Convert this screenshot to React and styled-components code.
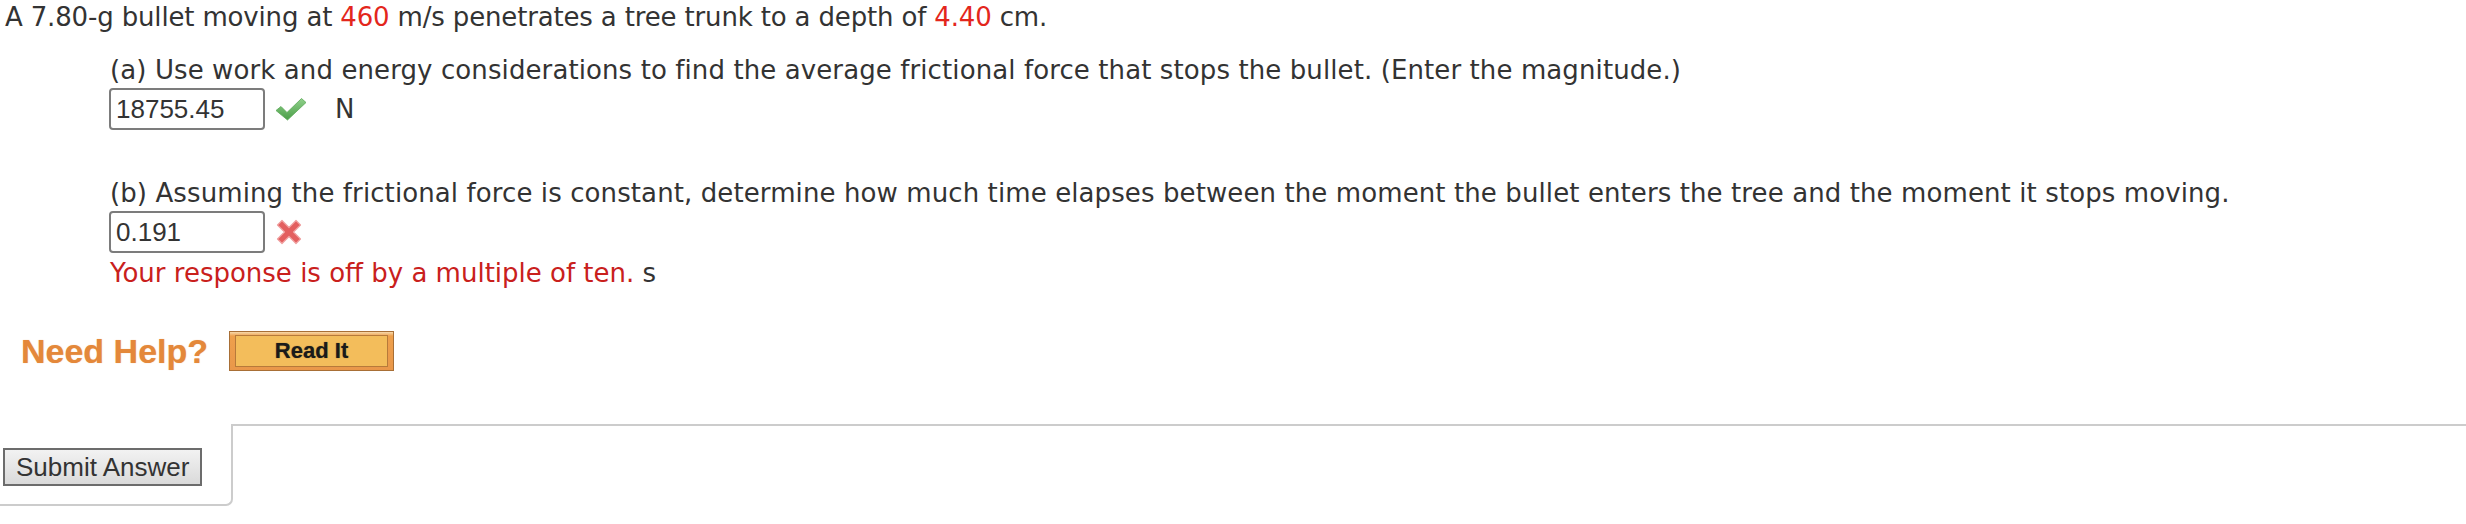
import React from "react";
import styled, { createGlobalStyle } from "styled-components";

const COLORS = {
  text: "#333333",
  given: "#e3261c",
  wrong: "#c9201c",
  rule: "#cccccc",
  help: "#e4883a",
};

const GlobalStyle = createGlobalStyle`
  body {
    margin: 0;
    background: #ffffff;
    font-family: Verdana, "DejaVu Sans", sans-serif;
    font-size: 26px;
    color: ${COLORS.text};
  }
`;

const Page = styled.div`
  padding-top: 0;
`;

const Stem = styled.p`
  margin: 0;
  padding-left: 5px;
  line-height: 34px;
  letter-spacing: -0.16px;
`;

const Given = styled.span`
  color: ${COLORS.given};
`;

const Part = styled.div`
  margin-left: 110px;
  margin-top: ${(props) => props.top}px;
`;

const Prompt = styled.p`
  margin: 0;
  line-height: 34px;
  letter-spacing: 0.1px;
`;

const AnswerRow = styled.div`
  display: flex;
  align-items: center;
  margin-top: 1px;
`;

const AnswerBox = styled.div`
  box-sizing: border-box;
  width: 156px;
  height: 42px;
  margin-left: -1px;
  border: 2px solid #7c7c7c;
  border-radius: 4px;
  padding: 0 5px;
  display: flex;
  align-items: center;
  font-family: Arial, "Liberation Sans", sans-serif;
  font-size: 26px;
  color: ${COLORS.text};
`;

const Mark = styled.svg`
  margin-left: ${(props) => props.gap}px;
  flex-shrink: 0;
`;

const Unit = styled.span`
  margin-left: 28px;
  line-height: 34px;
`;

const Feedback = styled.p`
  margin: 3px 0 0 0;
  line-height: 34px;
  color: ${COLORS.wrong};
  span {
    color: ${COLORS.text};
  }
`;

const HelpRow = styled.div`
  display: flex;
  align-items: center;
  margin-top: 41px;
  padding-left: 21px;
`;

const HelpLabel = styled.span`
  font-family: Arial, "Liberation Sans", sans-serif;
  font-weight: bold;
  font-size: 34px;
  color: ${COLORS.help};
  text-shadow: 0 0 1px rgba(228, 136, 58, 0.6);
`;

const ReadItButton = styled.button`
  box-sizing: border-box;
  width: 165px;
  height: 40px;
  margin-left: 21px;
  padding: 3px 5px;
  border: 1px solid #a86f36;
  background: linear-gradient(#f7d9ab 0, #eea04c 4px, #e9974a 100%);
  cursor: pointer;
  span {
    box-sizing: border-box;
    display: flex;
    align-items: center;
    justify-content: center;
    height: 100%;
    border: 1px solid #b77a3a;
    background: #f3bd5b;
    font-family: Arial, "Liberation Sans", sans-serif;
    font-weight: bold;
    font-size: 22px;
    color: #1a1a1a;
    text-shadow: 0 0 1px rgba(0, 0, 0, 0.5);
  }
`;

const SubmitBar = styled.div`
  display: flex;
  margin-top: 53px;
`;

const SubmitCell = styled.div`
  box-sizing: border-box;
  width: 233px;
  padding: 24px 0 18px 3px;
  border-right: 2px solid ${COLORS.rule};
  border-bottom: 2px solid ${COLORS.rule};
  border-bottom-right-radius: 7px;
`;

const SubmitButton = styled.button`
  box-sizing: border-box;
  width: 199px;
  height: 38px;
  padding: 0 0 0 11px;
  text-align: left;
  border: 2px solid #6c6c6c;
  background: linear-gradient(#f2f2f2, #dadada);
  font-family: Arial, "Liberation Sans", sans-serif;
  font-size: 26px;
  color: ${COLORS.text};
  cursor: pointer;
`;

const SubmitRest = styled.div`
  flex: 1;
  border-top: 2px solid ${COLORS.rule};
`;

const CheckIcon = () => (
  <Mark gap={10} width="32" height="24" viewBox="0 0 32 24">
    <defs>
      <linearGradient id="chk" x1="0" y1="0" x2="0" y2="1">
        <stop offset="0" stopColor="#8fd08a" />
        <stop offset="1" stopColor="#4b9e48" />
      </linearGradient>
    </defs>
    <path
      d="M1 13.5 L6 9.5 L12 15.5 L26.5 1.5 L31 5.5 L12.5 23 Z"
      fill="url(#chk)"
      stroke="#5aa857"
      strokeWidth="0.8"
      strokeLinejoin="round"
    />
  </Mark>
);

const CrossIcon = () => (
  <Mark gap={11} width="26" height="26" viewBox="0 0 26 26">
    <path
      d="M1.5 6 L6 1.5 L13 8.5 L20 1.5 L24.5 6 L17.5 13 L24.5 20 L20 24.5 L13 17.5 L6 24.5 L1.5 20 L8.5 13 Z"
      fill="#e35f5f"
      stroke="#f0a0a0"
      strokeWidth="1.2"
      strokeLinejoin="round"
    />
  </Mark>
);

const App = () => {
  return (
    <Page>
      <GlobalStyle />
      <Stem>
        A 7.80-g bullet moving at <Given>460</Given> m/s penetrates a tree
        trunk to a depth of <Given>4.40</Given> cm.
      </Stem>

      <Part top={19}>
        <Prompt>
          (a) Use work and energy considerations to find the average frictional
          force that stops the bullet. (Enter the magnitude.)
        </Prompt>
        <AnswerRow>
          <AnswerBox>18755.45</AnswerBox>
          <CheckIcon />
          <Unit>N</Unit>
        </AnswerRow>
      </Part>

      <Part top={46}>
        <Prompt>
          (b) Assuming the frictional force is constant, determine how much
          time elapses between the moment the bullet enters the tree and the
          moment it stops moving.
        </Prompt>
        <AnswerRow>
          <AnswerBox>0.191</AnswerBox>
          <CrossIcon />
        </AnswerRow>
        <Feedback>
          Your response is off by a multiple of ten. <span>s</span>
        </Feedback>
      </Part>

      <HelpRow>
        <HelpLabel>Need Help?</HelpLabel>
        <ReadItButton>
          <span>Read It</span>
        </ReadItButton>
      </HelpRow>

      <SubmitBar>
        <SubmitCell>
          <SubmitButton>Submit Answer</SubmitButton>
        </SubmitCell>
        <SubmitRest />
      </SubmitBar>
    </Page>
  );
};

export default App;
